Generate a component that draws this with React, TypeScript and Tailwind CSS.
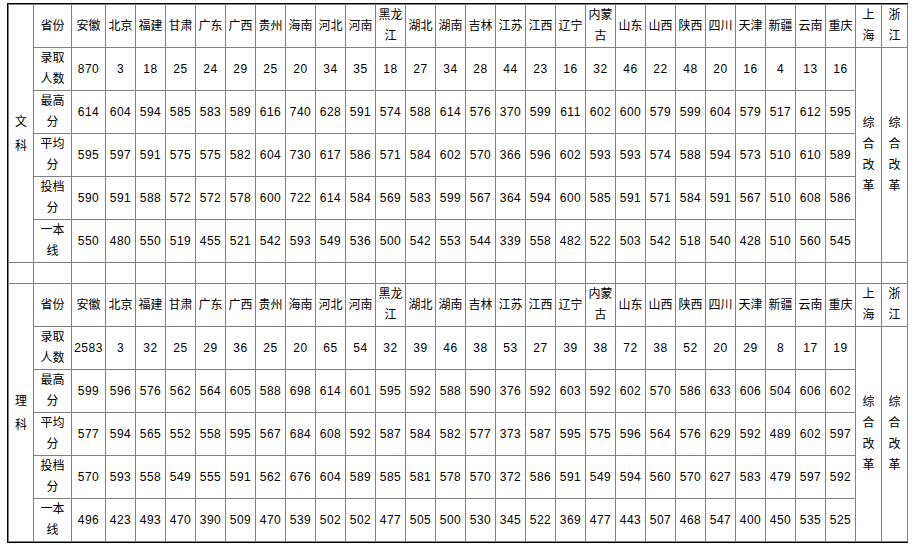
import React from "react";

type Section = {
  label: string;
  counts: string[];
  max: string[];
  avg: string[];
  cast: string[];
  line: string[];
};

const PROVINCES: React.ReactNode[] = [
  "安徽", "北京", "福建", "甘肃", "广东", "广西", "贵州", "海南", "河北", "河南",
  <>黑龙<br />江</>,
  "湖北", "湖南", "吉林", "江苏", "江西", "辽宁",
  <>内蒙<br />古</>,
  "山东", "山西", "陕西", "四川", "天津", "新疆", "云南", "重庆",
];

const row = (s: string) => s.split(" ");

const SECTIONS: Section[] = [
  {
    label: "文科",
    counts: row("870 3 18 25 24 29 25 20 34 35 18 27 34 28 44 23 16 32 46 22 48 20 16 4 13 16"),
    max: row("614 604 594 585 583 589 616 740 628 591 574 588 614 576 370 599 611 602 600 579 599 604 579 517 612 595"),
    avg: row("595 597 591 575 575 582 604 730 617 586 571 584 602 570 366 596 602 593 593 574 588 594 573 510 610 589"),
    cast: row("590 591 588 572 572 578 600 722 614 584 569 583 599 567 364 594 600 585 591 571 584 591 567 510 608 586"),
    line: row("550 480 550 519 455 521 542 593 549 536 500 542 553 544 339 558 482 522 503 542 518 540 428 510 560 545"),
  },
  {
    label: "理科",
    counts: row("2583 3 32 25 29 36 25 20 65 54 32 39 46 38 53 27 39 38 72 38 52 20 29 8 17 19"),
    max: row("599 596 576 562 564 605 588 698 614 601 595 592 588 590 376 592 603 592 602 570 586 633 606 504 606 602"),
    avg: row("577 594 565 552 558 595 567 684 608 592 587 584 582 577 373 587 595 575 596 564 576 629 592 489 602 597"),
    cast: row("570 593 558 549 555 591 562 676 604 589 585 581 578 570 372 586 591 549 594 560 570 627 583 479 597 592"),
    line: row("496 423 493 470 390 509 470 539 502 502 477 505 500 530 345 522 369 477 443 507 468 547 400 450 535 525"),
  },
];

const cell = "border border-[#808080] p-0 text-center align-middle leading-[21px] h-[42px]";

function Block({ s }: { s: Section }) {
  const body: [React.ReactNode, string[]][] = [
    [<>录取<br />人数</>, s.counts],
    [<>最高<br />分</>, s.max],
    [<>平均<br />分</>, s.avg],
    [<>投档<br />分</>, s.cast],
    [<>一本<br />线</>, s.line],
  ];
  return (
    <>
      <tr>
        <td rowSpan={6} className="border border-[#808080] p-0 text-center align-middle leading-[24px]">
          {s.label[0]}
          <br />
          {s.label[1]}
        </td>
        <td className={cell}>省份</td>
        {PROVINCES.map((p, i) => (
          <td key={i} className={cell}>
            {p}
          </td>
        ))}
        <td className={cell}>
          上<br />海
        </td>
        <td className={cell}>
          浙<br />江
        </td>
      </tr>
      {body.map(([head, vals], r) => (
        <tr key={r}>
          <td className={cell}>{head}</td>
          {vals.map((v, i) => (
            <td key={i} className={`${cell} tracking-[0.5px]`}>
              {v}
            </td>
          ))}
          {r === 0 && (
            <>
              <td rowSpan={5} className="border border-[#808080] p-0 text-center align-middle leading-[21px]">
                综<br />合<br />改<br />革
              </td>
              <td rowSpan={5} className="border border-[#808080] p-0 text-center align-middle leading-[21px]">
                综<br />合<br />改<br />革
              </td>
            </>
          )}
        </tr>
      ))}
    </>
  );
}

export default function App() {
  return (
    <div className="w-[914px] h-[545px] bg-white pt-[3px] pl-[7px]">
      <div className="w-[901px] border border-black">
        <table
          className="table-fixed border-collapse w-[899px] text-[12px] text-black"
          style={{ fontFamily: '"Liberation Sans", "Noto Sans CJK SC", sans-serif' }}
        >
          <colgroup>
            <col className="w-[25px]" />
            <col className="w-[38px]" />
            <col className="w-[34px]" />
            {Array.from({ length: 25 }).map((_, i) => (
              <col key={i} className="w-[30px]" />
            ))}
            <col className="w-[26px]" />
            <col className="w-[26px]" />
          </colgroup>
          <tbody>
            <Block s={SECTIONS[0]} />
            <tr>
              {Array.from({ length: 30 }).map((_, i) => (
                <td key={i} className="border border-[#808080] p-0 h-[21px]" />
              ))}
            </tr>
            <Block s={SECTIONS[1]} />
          </tbody>
        </table>
      </div>
    </div>
  );
}
